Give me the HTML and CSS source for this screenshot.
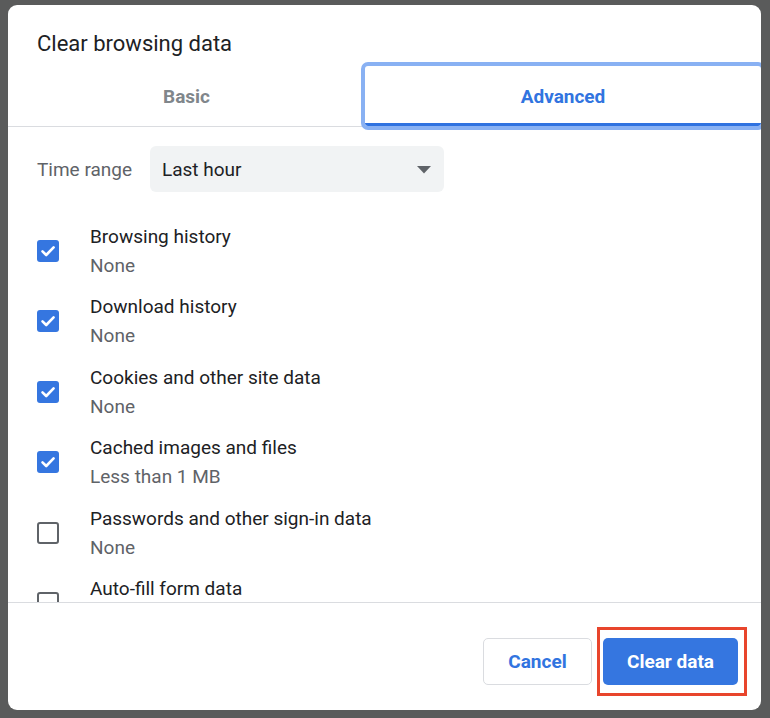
FILE: index.html
```html
<!DOCTYPE html>
<html>
<head>
<meta charset="utf-8">
<link rel="stylesheet" href="styles.css">
</head>
<body>
<div class="dialog">
  <div class="title">Clear browsing data</div>
  <div class="tabs">
    <div class="tab tab-basic">Basic</div>
    <div class="tab tab-active">Advanced</div>
  </div>
  <div class="body">
    <div class="time-row">
      <div class="time-label">Time range</div>
      <div class="select">
        <span class="select-text">Last hour</span>
        <svg class="select-arrow" width="14" height="8" viewBox="0 0 14 8"><path d="M0 0h14L7 7.5z" fill="#5f6368"/></svg>
      </div>
    </div>
    <div class="items">
      <div class="item">
        <div class="cb checked"><svg width="22" height="22" viewBox="0 0 22 22"><path d="M5.5 11.3l3.7 3.7 7.4-7.6" fill="none" stroke="#fff" stroke-width="2.6" stroke-linecap="round" stroke-linejoin="round"/></svg></div>
        <div class="item-text"><div class="item-title">Browsing history</div><div class="item-sub">None</div></div>
      </div>
      <div class="item">
        <div class="cb checked"><svg width="22" height="22" viewBox="0 0 22 22"><path d="M5.5 11.3l3.7 3.7 7.4-7.6" fill="none" stroke="#fff" stroke-width="2.6" stroke-linecap="round" stroke-linejoin="round"/></svg></div>
        <div class="item-text"><div class="item-title">Download history</div><div class="item-sub">None</div></div>
      </div>
      <div class="item">
        <div class="cb checked"><svg width="22" height="22" viewBox="0 0 22 22"><path d="M5.5 11.3l3.7 3.7 7.4-7.6" fill="none" stroke="#fff" stroke-width="2.6" stroke-linecap="round" stroke-linejoin="round"/></svg></div>
        <div class="item-text"><div class="item-title">Cookies and other site data</div><div class="item-sub">None</div></div>
      </div>
      <div class="item">
        <div class="cb checked"><svg width="22" height="22" viewBox="0 0 22 22"><path d="M5.5 11.3l3.7 3.7 7.4-7.6" fill="none" stroke="#fff" stroke-width="2.6" stroke-linecap="round" stroke-linejoin="round"/></svg></div>
        <div class="item-text"><div class="item-title">Cached images and files</div><div class="item-sub">Less than 1 MB</div></div>
      </div>
      <div class="item">
        <div class="cb"></div>
        <div class="item-text"><div class="item-title">Passwords and other sign-in data</div><div class="item-sub">None</div></div>
      </div>
      <div class="item">
        <div class="cb"></div>
        <div class="item-text"><div class="item-title">Auto-fill form data</div><div class="item-sub item-sub-empty"></div></div>
      </div>
    </div>
  </div>
  <div class="footer">
    <button class="btn btn-cancel">Cancel</button>
    <div class="primary-wrap">
      <button class="btn btn-primary">Clear data</button>
      <div class="highlight"></div>
    </div>
  </div>
</div>
</body>
</html>
```

FILE: styles.css
```css
html, body {
  margin: 0;
  padding: 0;
}
body {
  background: #5a5b5b;
  width: 770px;
  height: 718px;
  overflow: hidden;
  font-family: Roboto, "Liberation Sans", Arial, sans-serif;
  padding-top: 5px;
  padding-left: 8px;
  box-sizing: border-box;
}
.dialog {
  width: 753px;
  height: 705px;
  background: #fff;
  border-radius: 9px;
  overflow: hidden;
  display: flex;
  flex-direction: column;
}
.title {
  height: 61px;
  box-sizing: border-box;
  padding: 26px 0 0 29px;
  font-size: 22px;
  line-height: 26px;
  color: #202124;
  flex: none;
}
.tabs {
  display: flex;
  height: 61px;
  border-bottom: 1px solid #dadce0;
  box-sizing: border-box;
  flex: none;
}
.tab {
  display: flex;
  align-items: center;
  justify-content: center;
  font-size: 19px;
  font-weight: 700;
  height: 60px;
  box-sizing: border-box;
}
.tab-basic {
  width: 357px;
  color: #80868b;
}
.tab-active {
  width: 396px;
  color: #3174e0;
  border-bottom: 3px solid #2f72e0;
  padding-top: 3px;
  outline: 4px solid #89b1f3;
  border-radius: 3px;
  position: relative;
}
.body {
  height: 475px;
  overflow: hidden;
  flex: none;
}
.time-row {
  display: flex;
  align-items: center;
  padding: 19px 0 0 29px;
}
.time-label {
  width: 113px;
  font-size: 19px;
  color: #5f6368;
}
.select {
  width: 294px;
  height: 46px;
  background: #f1f3f4;
  border-radius: 6px;
  display: flex;
  align-items: center;
  justify-content: space-between;
  padding: 0 12px;
  box-sizing: border-box;
}
.select-text {
  font-size: 19px;
  color: #202124;
}
.select-arrow {
  margin-right: 1px;
  margin-top: 1px;
}
.items {
  margin-top: 23.25px;
}
.item {
  height: 70.5px;
  display: flex;
  align-items: center;
  padding-left: 29px;
}
.cb {
  width: 22px;
  height: 22px;
  box-sizing: border-box;
  border-radius: 3px;
  border: 2.5px solid #5f6368;
  margin-right: 31px;
  flex: none;
}
.cb.checked {
  border: none;
  background: #3576e0;
}
.cb svg {
  display: block;
}
.item-title {
  font-size: 19px;
  line-height: 29px;
  color: #202124;
}
.item-sub {
  font-size: 19px;
  line-height: 29px;
  height: 29px;
  color: #5f6368;
}
.footer {
  flex: 1;
  border-top: 1px solid #dadce0;
  display: flex;
  justify-content: flex-end;
  align-items: flex-start;
  padding: 35px 23px 0 0;
  gap: 11px;
}
.btn {
  height: 47px;
  font-family: Roboto, "Liberation Sans", Arial, sans-serif;
  font-size: 19px;
  font-weight: 700;
  border-radius: 5px;
  cursor: pointer;
  padding: 0;
}
.btn-cancel {
  width: 109px;
  background: #fff;
  color: #3174e0;
  border: 1px solid #dadce0;
}
.primary-wrap {
  position: relative;
}
.btn-primary {
  display: block;
  width: 135px;
  background: #3576e0;
  color: #fff;
  border: none;
}
.highlight {
  position: absolute;
  left: -6px;
  top: -11px;
  right: -9px;
  bottom: -11px;
  border: 3px solid #e8452c;
  pointer-events: none;
}
```
